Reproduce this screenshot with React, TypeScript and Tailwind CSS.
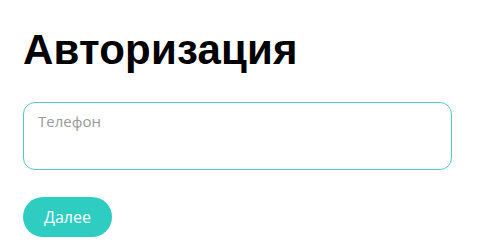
export default function App() {
  return (
    <div className="min-h-screen bg-white px-[23px] pt-[24px]" style={{ fontFamily: '"Open Sans", sans-serif' }}>
      <h1 className="text-[42px] font-bold leading-[52px] tracking-[0.2px] text-black" style={{ fontFamily: '"Liberation Sans", sans-serif' }}>
        Авторизация
      </h1>
      <div className="mt-[26px] w-[429px]">
        <input
          type="text"
          placeholder="Телефон"
          className="h-[68px] w-full rounded-[12px] border border-[#55c7c0] px-[14px] pb-[31px] text-[15px] text-gray-800 placeholder:text-[#9a9a9a] outline-none"
        />
      </div>
      <button className="mt-[27px] h-[40px] w-[89px] rounded-full bg-[#2fcdc1] text-[16px] text-white">
        Далее
      </button>
    </div>
  );
}
